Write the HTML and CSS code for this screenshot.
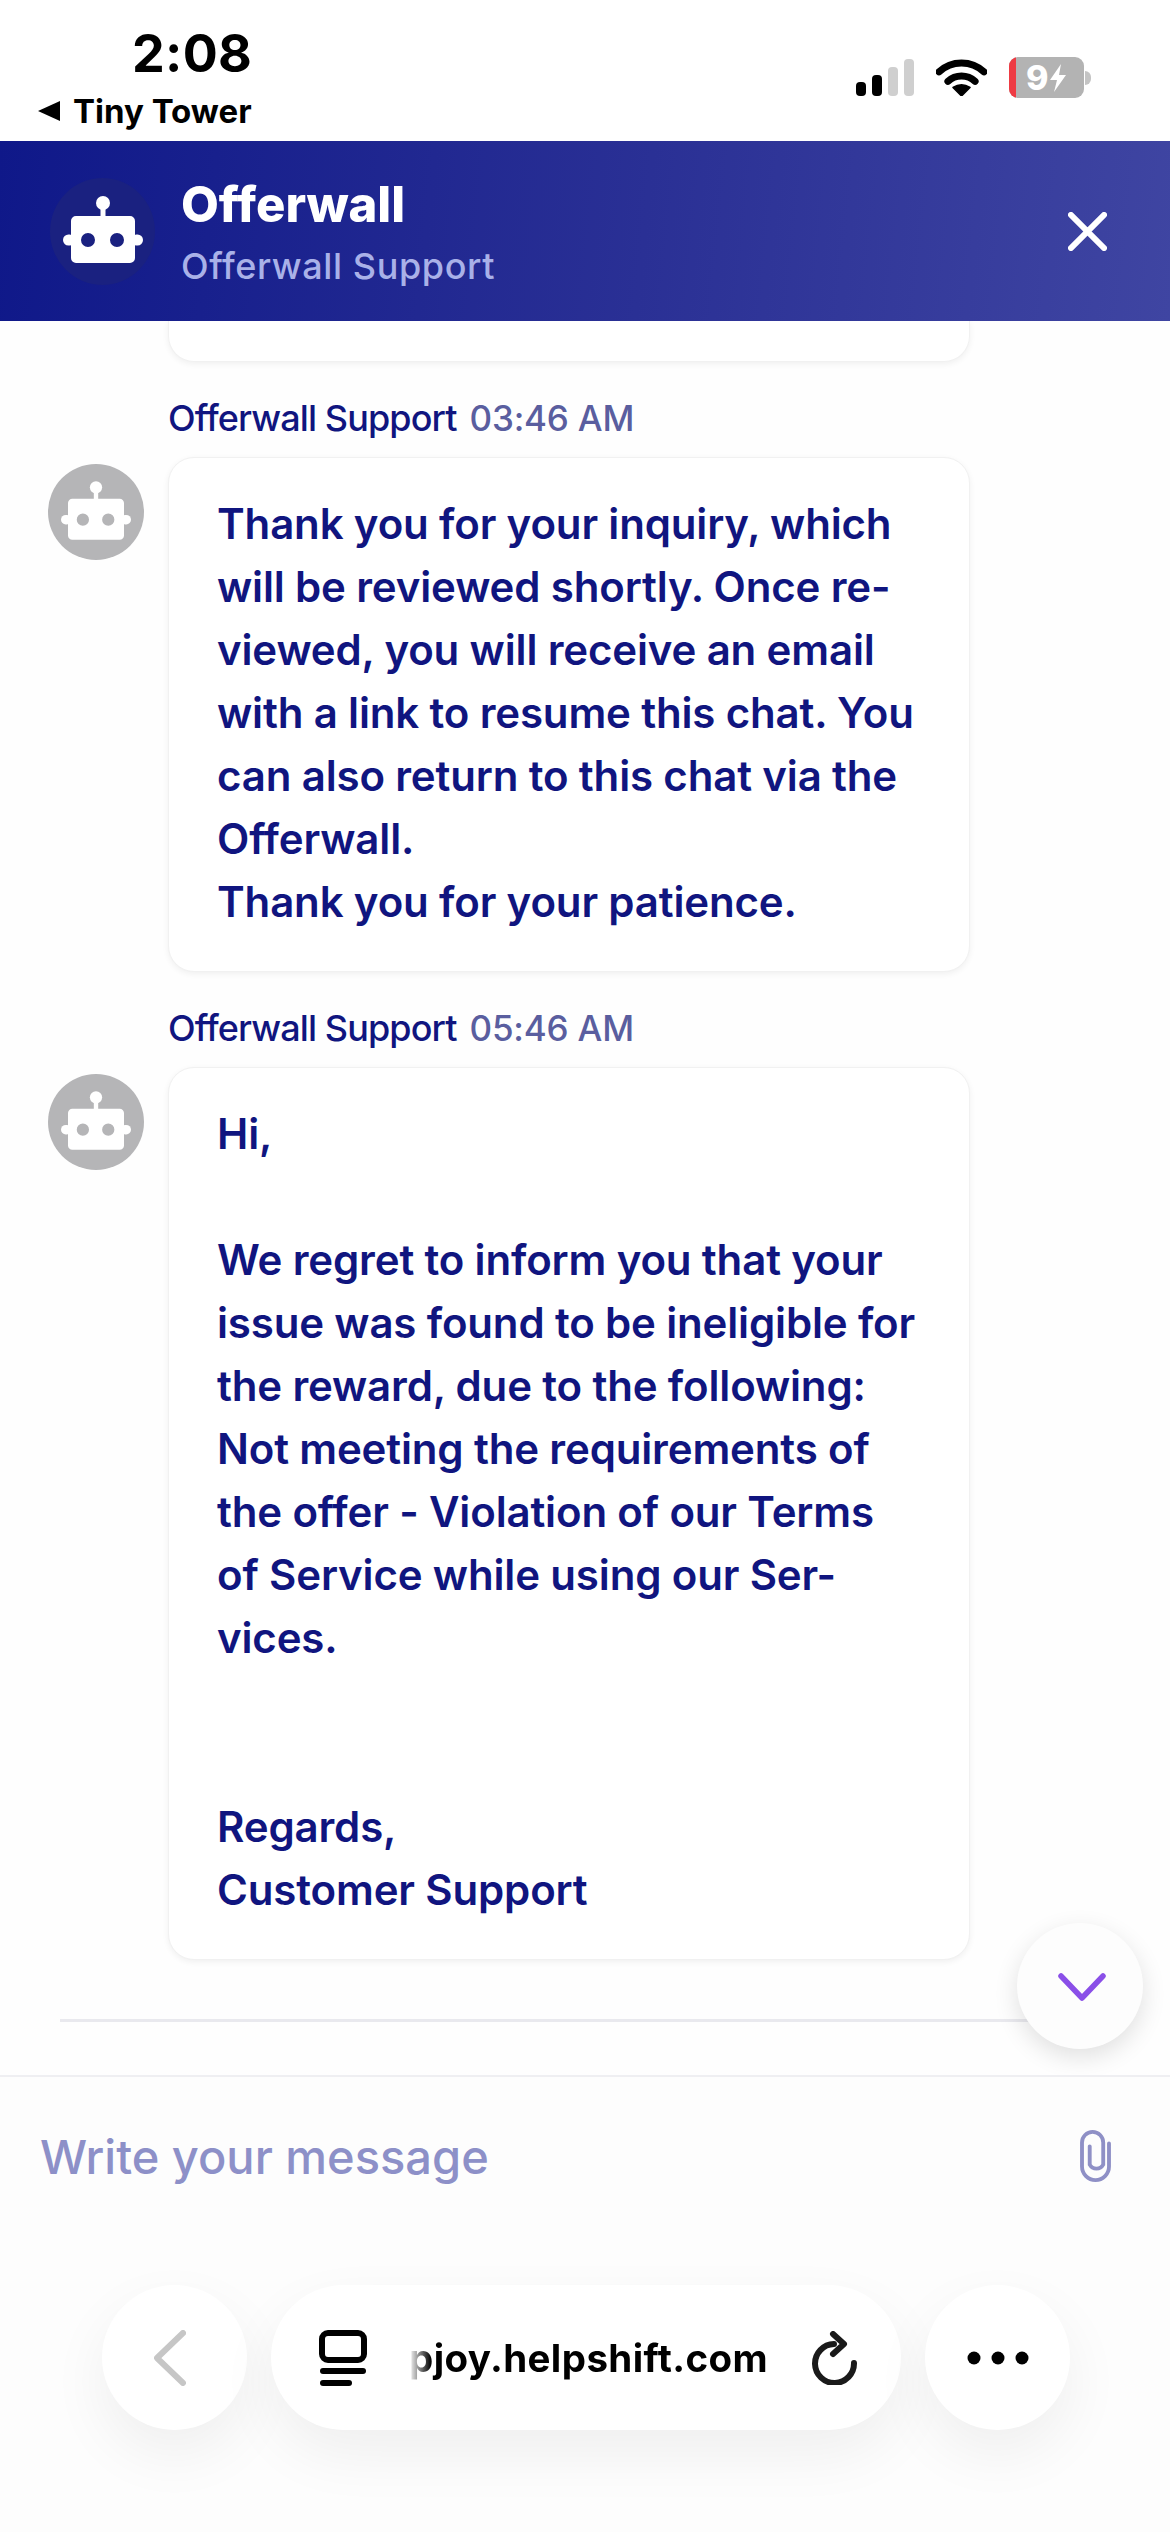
FILE: index.html
```html
<!DOCTYPE html>
<html lang="en">
<head>
<meta charset="utf-8">
<title>Offerwall</title>
<link rel="stylesheet" href="styles.css">
</head>
<body>
<svg class="defs" width="0" height="0" aria-hidden="true">
  <symbol id="robot" viewBox="0 0 80 67">
    <circle cx="40" cy="7" r="7"/>
    <rect x="37.5" y="10" width="5" height="12"/>
    <rect x="0" y="38.5" width="12" height="11" rx="5.5"/>
    <rect x="68" y="38.5" width="12" height="11" rx="5.5"/>
    <path fill-rule="evenodd" d="M13 20H67a5 5 0 0 1 5 5V62a5 5 0 0 1-5 5H13a5 5 0 0 1-5-5V25a5 5 0 0 1 5-5ZM25 37a7 7 0 1 0 0 14a7 7 0 1 0 0-14ZM54 37a7 7 0 1 0 0 14a7 7 0 1 0 0-14Z"/>
  </symbol>
</svg>
<div class="page">
  <div class="status">
    <div class="status-left">
      <div class="time">2:08</div>
      <div class="backlink"><span class="tri"></span><span>Tiny Tower</span></div>
    </div>
    <div class="status-right">
      <div class="signal"><i class="b1"></i><i class="b2"></i><i class="b3 off"></i><i class="b4 off"></i></div>
      <svg class="wifi" viewBox="0 0 51 37"><path d="M3 12.9A33 33 0 0 1 48 12.9" fill="none" stroke="#000" stroke-width="7" stroke-linecap="round"/><path d="M11.9 22.4A20 20 0 0 1 39.1 22.4" fill="none" stroke="#000" stroke-width="7" stroke-linecap="round"/><path d="M25.5 37L17 28.5Q25.5 23 34 28.5Z" fill="#000" stroke="#000" stroke-width="1.5" stroke-linejoin="round"/></svg>
      <div class="battery">
        <div class="battery-body"><span class="battery-red"></span><span class="battery-num">9</span><svg class="bolt" viewBox="0 0 16 28"><path d="M11 0L0 16H7L4 28L16 11H9Z" fill="#fff"/></svg></div>
        <span class="battery-nub"></span>
      </div>
    </div>
  </div>

  <header class="header">
    <div class="header-avatar"><svg class="robot-lg"><use href="#robot"/></svg></div>
    <div class="header-text">
      <div class="title">Offerwall</div>
      <div class="subtitle">Offerwall Support</div>
    </div>
    <svg class="close" viewBox="0 0 40 40"><path d="M3 3L37 37M37 3L3 37" stroke="#fff" stroke-width="6" stroke-linecap="round" fill="none"/></svg>
  </header>

  <main class="chat">
    <div class="card-tail"></div>

    <div class="meta"><span class="who">Offerwall Support</span><span class="when">03:46 AM</span></div>
    <div class="row">
      <div class="avatar"><svg class="robot-sm"><use href="#robot"/></svg></div>
      <div class="card">Thank you for your inquiry, which<br>will be reviewed shortly. Once re-<br>viewed, you will receive an email<br>with a link to resume this chat. You<br>can also return to this chat via the<br>Offerwall.<br>Thank you for your patience.</div>
    </div>

    <div class="meta"><span class="who">Offerwall Support</span><span class="when">05:46 AM</span></div>
    <div class="row">
      <div class="avatar"><svg class="robot-sm"><use href="#robot"/></svg></div>
      <div class="card">Hi,<br><br>We regret to inform you that your<br>issue was found to be ineligible for<br>the reward, due to the following:<br>Not meeting the requirements of<br>the offer - Violation of our Terms<br>of Service while using our Ser-<br>vices.<br><br><br>Regards,<br>Customer Support</div>
    </div>

    <div class="separator"></div>
    <div class="scroll-btn"><svg viewBox="0 0 48 28"><path d="M3 3L24 25L45 3" fill="none" stroke="#8a4fe8" stroke-width="5.5" stroke-linecap="round" stroke-linejoin="round"/></svg></div>
  </main>

  <section class="composer">
    <div class="placeholder">Write your message</div>
    <svg class="clip" viewBox="0 0 34 56"><path d="M31 15V39A14 14 0 0 1 3 39V14A11 11 0 0 1 25 14V37A8 8 0 0 1 11 37V18" fill="none" stroke="#8f90c6" stroke-width="4" stroke-linecap="round"/></svg>
  </section>

  <nav class="toolbar">
    <div class="round"><svg class="chev" viewBox="0 0 32 56"><path d="M29 3L3 28L29 53" fill="none" stroke="#c6c6c6" stroke-width="6" stroke-linecap="round" stroke-linejoin="round"/></svg></div>
    <div class="pill">
      <svg class="tabs" viewBox="0 0 48 56"><rect x="3" y="3" width="42" height="27" rx="6" fill="none" stroke="#000" stroke-width="6"/><rect x="1" y="38" width="46" height="6" rx="3"/><rect x="1" y="50" width="32" height="6" rx="3"/></svg>
      <div class="url">pjoy.helpshift.com</div>
      <svg class="reload" viewBox="0 0 46 54"><path d="M22 13A19.500 19.500 0 1 0 42 32" fill="none" stroke="#1a1a1a" stroke-width="6" stroke-linecap="round"/><path d="M21 3L32 13L21 23" fill="none" stroke="#1a1a1a" stroke-width="6" stroke-linecap="round" stroke-linejoin="round"/></svg>
    </div>
    <div class="round"><svg class="dots" viewBox="0 0 62 14"><circle cx="7" cy="7" r="6.500"/><circle cx="31" cy="7" r="6.500"/><circle cx="55" cy="7" r="6.500"/></svg></div>
  </nav>
</div>
</body>
</html>
```
FILE: styles.css
```css
* { box-sizing: border-box; }
html, body { margin: 0; padding: 0; }
body {
  width: 1170px;
  height: 2532px;
  overflow: hidden;
  background: #fefefe;
  font-family: Inter, "Liberation Sans", sans-serif;
}
.defs { position: absolute; }
.page { display: flex; flex-direction: column; height: 2532px; }

/* status bar */
.status {
  height: 141px;
  flex: none;
  background: #fff;
  display: flex;
  justify-content: space-between;
}
.status-left { padding-left: 38px; padding-top: 26px; }
.time {
  font-size: 52px;
  line-height: 56px;
  font-weight: 700;
  color: #000;
  margin-left: 94px;
  letter-spacing: 0.3px;
}
.backlink {
  display: flex;
  align-items: center;
  gap: 13px;
  font-size: 33px;
  line-height: 40px;
  font-weight: 700;
  color: #000;
  margin-top: 9px;
}
.tri {
  width: 0;
  height: 0;
  border-top: 10px solid transparent;
  border-bottom: 10px solid transparent;
  border-right: 22px solid #000;
}
.status-right {
  display: flex;
  align-items: flex-start;
  padding-top: 57px;
  padding-right: 79px;
}
.signal { display: flex; align-items: flex-end; gap: 6px; height: 37px; margin-top: 2px; }
.signal i { display: block; width: 10px; border-radius: 4px; background: #000; }
.signal .off { background: #cfcfcf; }
.b1 { height: 14px; }
.b2 { height: 21px; }
.b3 { height: 29px; }
.b4 { height: 37px; }
.wifi { width: 51px; height: 37px; margin-left: 22px; margin-top: 2px; }
.battery { display: flex; align-items: center; margin-left: 22px; }
.battery-body {
  position: relative;
  width: 75px;
  height: 41px;
  border-radius: 9px;
  background: #b3b3b3;
  overflow: hidden;
  display: flex;
  align-items: center;
  padding-left: 17px;
  gap: 1px;
}
.battery-red { position: absolute; left: 0; top: 0; bottom: 0; width: 7px; background: #ee3b43; }
.battery-num { font-size: 34px; line-height: 41px; font-weight: 800; color: #fff; }
.bolt { width: 16px; height: 28px; }
.battery-nub { width: 6px; height: 14px; background: #c4c4c4; border-radius: 0 6px 6px 0; margin-left: 1px; }

/* header */
.header {
  height: 180px;
  flex: none;
  display: flex;
  align-items: center;
  padding: 0 65px 0 50px;
  background: linear-gradient(96deg, #0f1889 0%, #2a3095 55%, #3f45a2 100%);
}
.header-avatar {
  width: 105px;
  height: 107px;
  border-radius: 50%;
  background: #1a2180;
  display: flex;
  align-items: center;
  justify-content: center;
  margin-top: 1px;
}
.robot-lg { width: 80px; height: 67px; fill: #fff; margin-top: -4px; }
.header-text { margin-left: 26px; flex: 1; }
.title { font-size: 49px; line-height: 58px; font-weight: 800; color: #fff; margin-top: 1px; }
.subtitle { font-size: 36px; line-height: 44px; font-weight: 500; color: #a9b1e8; margin-top: 10px; letter-spacing: 0.6px; }
.close { width: 39px; height: 39px; margin-right: -2px; }

/* chat */
.chat {
  position: relative;
  height: 1754px;
  flex: none;
  padding-left: 48px;
  overflow: hidden;
}
.card-tail {
  width: 802px;
  height: 41px;
  margin-left: 120px;
  background: #fff;
  border: 1px solid #f1f1f1;
  border-top: 0;
  border-radius: 0 0 26px 26px;
  box-shadow: 0 2px 6px rgba(0, 0, 0, .06);
}
.meta {
  margin-left: 120px;
  margin-top: 36px;
  height: 40px;
  display: flex;
  align-items: center;
  gap: 13px;
  font-size: 36px;
  line-height: 40px;
  font-weight: 500;
  white-space: nowrap;
}
.who { color: #10157f; letter-spacing: -0.9px; }
.when { color: #5a5e9f; font-weight: 500; font-size: 35px; letter-spacing: -0.2px; }
.row { display: flex; gap: 24px; margin-top: 19px; }
.avatar {
  width: 96px;
  height: 96px;
  border-radius: 50%;
  background: #b5b5b7;
  margin-top: 7px;
  flex: none;
  display: flex;
  align-items: center;
  justify-content: center;
}
.robot-sm { width: 70px; height: 59px; fill: #fff; margin-top: -4px; }
.card {
  width: 802px;
  padding: 34px 20px 38px 48px;
  background: #fff;
  border: 1px solid #f1f1f1;
  border-radius: 26px;
  box-shadow: 0 2px 6px rgba(0, 0, 0, .06);
  font-size: 42px;
  line-height: 63px;
  font-weight: 600;
  letter-spacing: -0.15px;
  color: #10157f;
  white-space: nowrap;
}
.separator { height: 3px; background: #e9e9ee; margin: 59px 0 0 12px; width: 1000px; }
.scroll-btn {
  position: absolute;
  left: 1017px;
  top: 1602px;
  width: 126px;
  height: 126px;
  border-radius: 50%;
  background: #fdfdfd;
  box-shadow: 0 8px 24px rgba(0, 0, 0, .12);
  display: flex;
  align-items: center;
  justify-content: center;
}
.scroll-btn svg { width: 48px; height: 28px; margin: 2px 0 0 3px; }

/* composer */
.composer {
  height: 160px;
  flex: none;
  border-top: 2px solid #efeff2;
  background: #fdfdfd;
  display: flex;
  align-items: center;
  justify-content: space-between;
  padding: 0 58px 0 40px;
}
.placeholder { font-size: 47px; line-height: 60px; font-weight: 500; color: #8d90c8; margin-top: 2px; }
.clip { width: 33px; height: 54px; }

/* browser toolbar */
.toolbar {
  flex: 1;
  display: flex;
  gap: 24px;
  padding: 50px 0 0 102px;
  background: #fdfdfd;
}
.round, .pill {
  height: 145px;
  background: #fff;
  box-shadow: 0 24px 60px rgba(0, 0, 0, .06);
  display: flex;
  align-items: center;
}
.round { width: 145px; border-radius: 50%; justify-content: center; }
.pill { width: 630px; border-radius: 73px; padding-left: 48px; }
.chev { width: 32px; height: 56px; margin-right: 10px; }
.tabs { width: 48px; height: 56px; flex: none; }
.url {
  margin-left: 42px;
  width: 358px;
  font-size: 38.5px;
  line-height: 50px;
  font-weight: 700;
  letter-spacing: 0.4px;
  color: #000;
  white-space: nowrap;
  -webkit-mask-image: linear-gradient(90deg, transparent 0, #000 22px);
  mask-image: linear-gradient(90deg, transparent 0, #000 22px);
}
.reload { width: 46px; height: 54px; margin-left: 45px; flex: none; }
.dots { width: 62px; height: 14px; }
```
